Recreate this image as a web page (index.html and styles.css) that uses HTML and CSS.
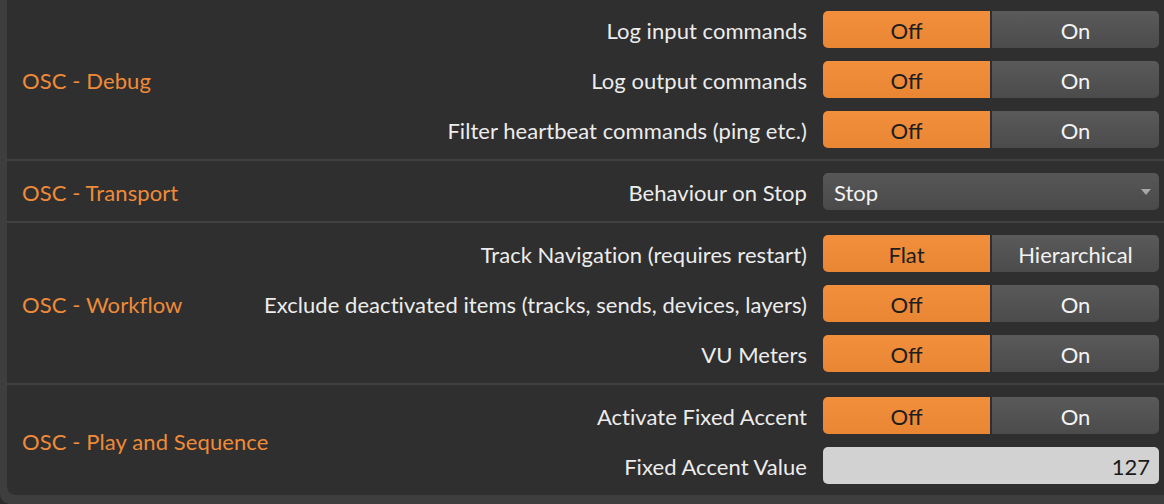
FILE: index.html
```html
<!DOCTYPE html>
<html>
<head>
<meta charset="utf-8">
<link rel="stylesheet" href="styles.css">
</head>
<body>
<div class="frame">
  <div class="panel">
    <section class="sec rows3">
      <div class="title">OSC - Debug</div>
      <div class="label">Log input commands</div>
      <div class="toggle"><span class="opt on-sel">Off</span><span class="opt">On</span></div>
      <div class="label">Log output commands</div>
      <div class="toggle"><span class="opt on-sel">Off</span><span class="opt">On</span></div>
      <div class="label">Filter heartbeat commands (ping etc.)</div>
      <div class="toggle"><span class="opt on-sel">Off</span><span class="opt">On</span></div>
    </section>
    <section class="sec rows1">
      <div class="title">OSC - Transport</div>
      <div class="label">Behaviour on Stop</div>
      <div class="select"><span>Stop</span><span class="caret"></span></div>
    </section>
    <section class="sec rows3">
      <div class="title">OSC - Workflow</div>
      <div class="label">Track Navigation (requires restart)</div>
      <div class="toggle"><span class="opt on-sel">Flat</span><span class="opt">Hierarchical</span></div>
      <div class="label">Exclude deactivated items (tracks, sends, devices, layers)</div>
      <div class="toggle"><span class="opt on-sel">Off</span><span class="opt">On</span></div>
      <div class="label">VU Meters</div>
      <div class="toggle"><span class="opt on-sel">Off</span><span class="opt">On</span></div>
    </section>
    <section class="sec rows2 last">
      <div class="title">OSC - Play and Sequence</div>
      <div class="label">Activate Fixed Accent</div>
      <div class="toggle"><span class="opt on-sel">Off</span><span class="opt">On</span></div>
      <div class="label">Fixed Accent Value</div>
      <div class="number">127</div>
    </section>
  </div>
</div>
</body>
</html>
```

FILE: styles.css
```css
html, body {
  margin: 0;
  padding: 0;
  background: #2c2c2c;
  overflow: hidden;
}
body {
  font-family: Lato, "Noto Sans", sans-serif;
  font-size: 22px;
  color: #ececec;
}
.frame {
  margin-top: -1px;
  background: #3e3e3e;
  padding: 0 0 9px 7px;
  border-radius: 0 0 0 10px;
}
.panel {
  background: #404040;
  border-radius: 0 0 0 8px;
  overflow: hidden;
  display: flex;
  flex-direction: column;
  gap: 2px;
}
.sec {
  background: #2f2f2f;
  display: grid;
  grid-template-columns: 1fr auto 336px;
  grid-auto-rows: 50px;
  column-gap: 16px;
  padding: 5px 5px 5px 15px;
  align-items: center;
}
.sec.last {
  border-radius: 0 0 0 8px;
}
.title {
  grid-column: 1;
  grid-row: 1 / -1;
  color: #ef8b38;
  align-self: center;
  padding-top: 2px;
  letter-spacing: 0.1px;
}
.rows1 .title { grid-row: 1 / 2; }
.rows2 .title { grid-row: 1 / 3; }
.rows3 .title { grid-row: 1 / 4; }
.label {
  grid-column: 2;
  text-align: right;
  white-space: nowrap;
  padding-top: 2px;
  letter-spacing: 0.05px;
}
.toggle, .select, .number {
  grid-column: 3;
  height: 37px;
  box-sizing: border-box;
}
.toggle {
  display: flex;
  gap: 2px;
  border-radius: 5px;
  overflow: hidden;
}
.opt {
  flex: 1;
  display: flex;
  align-items: center;
  justify-content: center;
  padding-top: 2px;
  background: linear-gradient(#5a5a5a, #4b4b4b);
  color: #f2f2f2;
}
.opt.on-sel {
  background: linear-gradient(#f28f3d, #e98634);
  color: #1d1d1d;
}
.select {
  display: flex;
  align-items: center;
  justify-content: space-between;
  padding: 2px 8px 0 11px;
  background: linear-gradient(#575757, #4a4a4a);
  border-radius: 5px;
  color: #f2f2f2;
}
.caret {
  width: 0;
  height: 0;
  border-left: 5px solid transparent;
  border-right: 5px solid transparent;
  border-top: 6px solid #a8a8a8;
}
.number {
  display: flex;
  align-items: center;
  justify-content: flex-end;
  padding: 2px 9px 0 0;
  background: #d2d2d2;
  border-radius: 5px;
  color: #1a1a1a;
}
```
